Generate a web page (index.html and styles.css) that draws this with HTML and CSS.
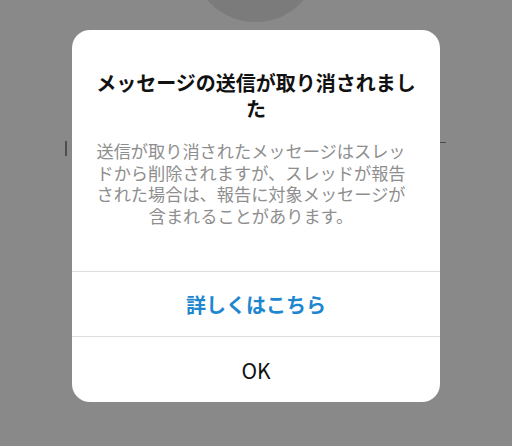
FILE: index.html
```html
<!DOCTYPE html>
<html lang="ja">
<head>
<meta charset="utf-8">
<title>メッセージの送信が取り消されました</title>
<link rel="stylesheet" href="styles.css">
</head>
<body>
<div class="page">
  <div class="backdrop">
    <div class="avatar"></div>
    <span class="peek peek-left"></span>
    <span class="peek peek-right"></span>
  </div>
  <div class="dialog" role="dialog">
    <div class="dialog-content">
      <h1 class="dialog-title">メッセージの送信が取り消されました</h1>
      <p class="dialog-text">送信が取り消されたメッセージはスレッドから削除されますが、スレッドが報告された場合は、報告に対象メッセージが含まれることがあります。</p>
    </div>
    <button class="dialog-btn dialog-btn-link">詳しくはこちら</button>
    <button class="dialog-btn">OK</button>
  </div>
</div>
</body>
</html>
```
FILE: styles.css
```css
html, body {
  margin: 0;
  padding: 0;
}

body {
  width: 512px;
  height: 446px;
  overflow: hidden;
  background: #898989;
  font-family: "Noto Sans CJK JP", "Noto Sans", sans-serif;
}

.page {
  position: relative;
  width: 512px;
  height: 446px;
}

.backdrop {
  position: absolute;
  inset: 0;
}

.avatar {
  position: absolute;
  left: 192px;
  top: -105px;
  width: 127px;
  height: 127px;
  border-radius: 50%;
  background: #7b7b7b;
}

.peek {
  position: absolute;
  background: #4e4e4e;
}

.peek-left {
  left: 65px;
  top: 141px;
  width: 2px;
  height: 15px;
}

.peek-right {
  left: 440px;
  top: 142px;
  width: 6px;
  height: 1px;
}

.dialog {
  position: absolute;
  left: 72px;
  top: 30px;
  width: 368px;
  height: 372px;
  background: #ffffff;
  border-radius: 18px;
  display: flex;
  flex-direction: column;
  overflow: hidden;
}

.dialog-content {
  padding: 40px 0 45px;
  border-bottom: 1px solid #dedede;
}

.dialog-title {
  margin: 0;
  padding: 0 20px;
  font-size: 20px;
  line-height: 26px;
  font-weight: 700;
  color: #111111;
  text-align: center;
}

.dialog-text {
  margin: 18px 0 0;
  padding: 0 30px 0 20px;
  font-size: 17.2px;
  line-height: 21.5px;
  color: #8e8e8e;
  text-align: center;
}

.dialog-btn {
  flex: 1;
  display: flex;
  align-items: center;
  justify-content: center;
  margin: 0;
  padding: 0;
  border: 0;
  background: transparent;
  font-family: inherit;
  font-size: 21px;
  color: #111111;
}

.dialog-btn-link {
  flex: 0 0 65px;
  border-bottom: 1px solid #dedede;
  font-size: 20px;
  font-weight: 600;
  color: #1d86d0;
}
```
